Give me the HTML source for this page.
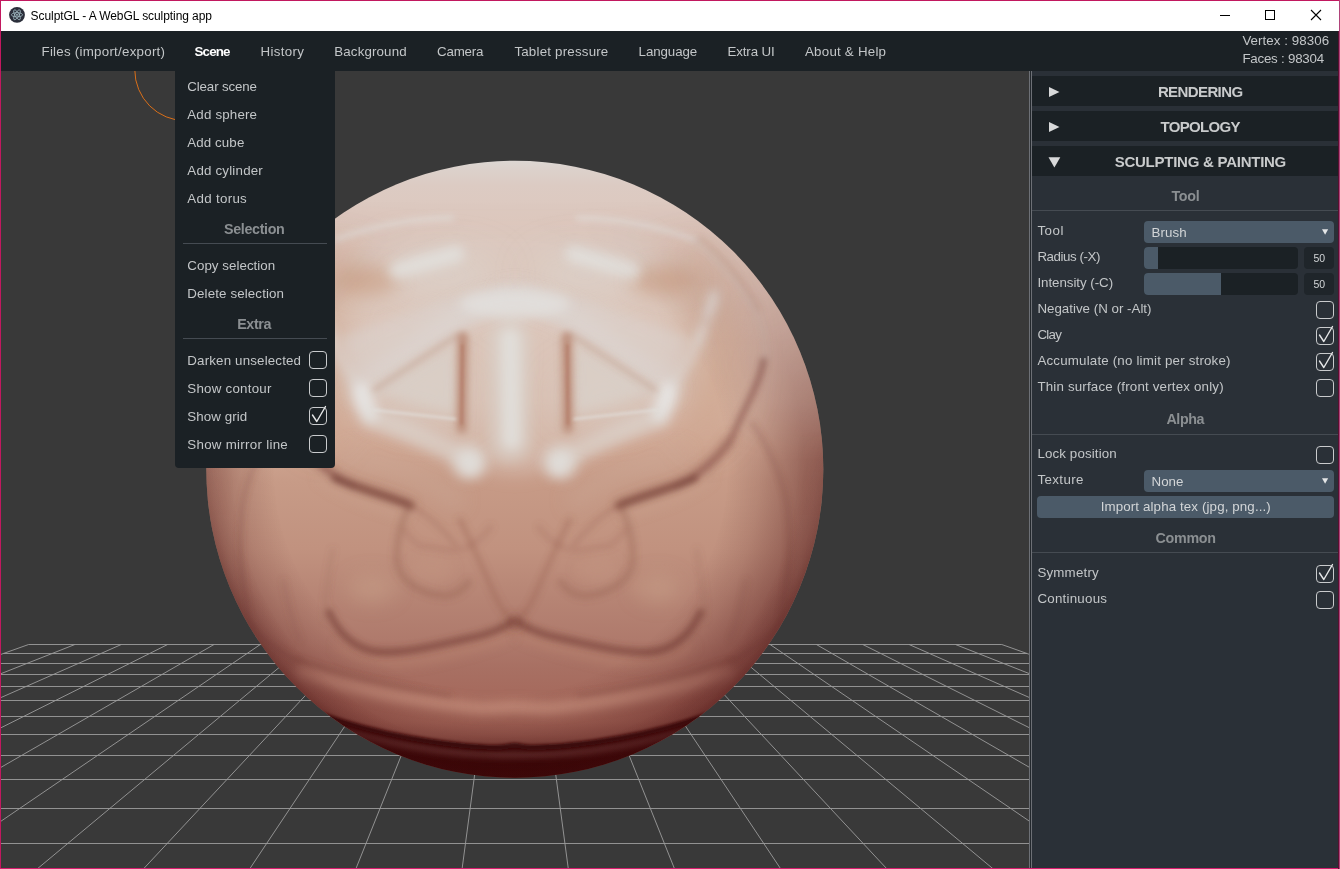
<!DOCTYPE html>
<html>
<head>
<meta charset="utf-8">
<title>SculptGL - A WebGL sculpting app</title>
<style>
html,body{margin:0;padding:0;}
body{width:1340px;height:869px;overflow:hidden;background:#393939;font-family:"Liberation Sans",sans-serif;position:relative;}
.abs{position:absolute;}
.t{position:absolute;white-space:nowrap;line-height:20px;height:20px;}
#titlebar{left:1px;top:1px;width:1338px;height:30px;background:#ffffff;}
#menubar{left:1px;top:31px;width:1337px;height:40px;background:#1b2125;}
#canvas{left:1px;top:71px;width:1028px;height:797px;background:#393939;overflow:hidden;}
#dropdown{left:175px;top:71px;width:160px;height:397px;background:#1b2125;border-radius:0 0 4px 4px;}
#sidebar{left:1029px;top:71px;width:309px;height:797px;background:#2a3037;}
.sbl{position:absolute;top:0;width:1px;height:797px;background:#6d7076;}
.hdr{position:absolute;left:3px;width:306px;height:30px;background:#1b2125;}
.hr{position:absolute;height:1px;background:#454b52;}
.sel{position:absolute;left:1144px;width:190px;height:22px;background:#4b5a68;border-radius:4px;}
.sld{position:absolute;left:1144px;width:154px;height:22px;background:#1b2125;border-radius:4px;overflow:hidden;}
.sld i{position:absolute;left:0;top:0;height:22px;background:#4b5a68;display:block;}
.val{position:absolute;left:1304px;width:30px;height:22px;background:#1f252a;border-radius:4px;}
.cb{position:absolute;width:16px;height:16px;border:1px solid #c9cbcd;border-radius:4px;}
.btn{position:absolute;left:1037px;top:496px;width:297px;height:22px;background:#4b5a68;border-radius:4px;}
</style>
</head>
<body>
<!-- window frame -->
<div class="abs" id="titlebar"></div>
<div class="abs" id="menubar"></div>

<!-- 3d canvas -->
<div class="abs" id="canvas">
<svg width="1028" height="797" viewBox="1 71 1028 797" style="position:absolute;left:0;top:0">
  <path d="M28.6 644.5H1001.8M3.4 653.5H1027.0M-5.0 663.5H1035.0M-5.0 674.5H1035.0M-5.0 686.5H1035.0M-5.0 700.5H1035.0M-5.0 716.5H1035.0M-5.0 734.5H1035.0M-5.0 755.5H1035.0M-5.0 779.5H1035.0M-5.0 808.5H1035.0M-5.0 843.5H1035.0M492.0 644.5L460.6 880.0M538.4 644.5L569.8 880.0M445.7 644.5L351.4 880.0M584.7 644.5L679.0 880.0M399.3 644.5L242.3 880.0M631.1 644.5L788.1 880.0M353.0 644.5L133.1 880.0M677.4 644.5L897.3 880.0M306.7 644.5L23.9 880.0M723.7 644.5L1006.5 880.0M260.3 644.5L-85.3 880.0M770.1 644.5L1115.7 880.0M214.0 644.5L-194.4 880.0M816.4 644.5L1224.8 880.0M167.6 644.5L-303.6 880.0M862.8 644.5L1334.0 880.0M121.3 644.5L-412.8 880.0M909.1 644.5L1443.2 880.0M74.9 644.5L-522.0 880.0M955.5 644.5L1552.4 880.0M28.6 644.5L-631.1 880.0M1001.8 644.5L1661.5 880.0" stroke="#9c9c9c" stroke-width="0.9" fill="none"/>
  <circle cx="185.5" cy="70" r="50.7" fill="none" stroke="#d96f19" stroke-width="1"/>
    <defs>
    <clipPath id="sclip"><circle cx="514.8" cy="469.2" r="308.5"/></clipPath>
    <linearGradient id="sv" gradientUnits="userSpaceOnUse" x1="0" y1="160.0" x2="0" y2="778.0">
      <stop offset="0.0000" stop-color="#dcd7d3"/>
      <stop offset="0.0162" stop-color="#dcd1cb"/>
      <stop offset="0.0405" stop-color="#dccbc3"/>
      <stop offset="0.1246" stop-color="#dec7bc"/>
      <stop offset="0.2751" stop-color="#dec3b5"/>
      <stop offset="0.3883" stop-color="#d8b7a6"/>
      <stop offset="0.4612" stop-color="#d0a793"/>
      <stop offset="0.5194" stop-color="#c79b87"/>
      <stop offset="0.6294" stop-color="#c1927f"/>
      <stop offset="0.7104" stop-color="#b68474"/>
      <stop offset="0.7767" stop-color="#af7a6c"/>
      <stop offset="0.8204" stop-color="#a87063"/>
      <stop offset="0.8738" stop-color="#a5695c"/>
      <stop offset="0.9094" stop-color="#a26558"/>
      <stop offset="0.9304" stop-color="#965a4f"/>
      <stop offset="0.9466" stop-color="#854a41"/>
      <stop offset="1.0000" stop-color="#6a342e"/>
    </linearGradient>
    <radialGradient id="sedge" gradientUnits="userSpaceOnUse" cx="500.79999999999995" cy="469.2" r="323.5">
      <stop offset="0" stop-color="#480c0e" stop-opacity="0"/>
      <stop offset="0.70" stop-color="#480c0e" stop-opacity="0"/>
      <stop offset="0.80" stop-color="#480c0e" stop-opacity="0.13"/>
      <stop offset="0.88" stop-color="#480c0e" stop-opacity="0.28"/>
      <stop offset="0.94" stop-color="#480c0e" stop-opacity="0.39"/>
      <stop offset="1" stop-color="#480c0e" stop-opacity="0.45"/>
    </radialGradient>
    <radialGradient id="srim" gradientUnits="userSpaceOnUse" cx="514.8" cy="469.2" r="309.5">
      <stop offset="0" stop-color="#400a0c" stop-opacity="0"/>
      <stop offset="0.91" stop-color="#400a0c" stop-opacity="0"/>
      <stop offset="0.97" stop-color="#400a0c" stop-opacity="0.15"/>
      <stop offset="1" stop-color="#400a0c" stop-opacity="0.3"/>
    </radialGradient>
    <linearGradient id="rmaskg" gradientUnits="userSpaceOnUse" x1="0" y1="430" x2="0" y2="600">
      <stop offset="0" stop-color="#000"/>
      <stop offset="1" stop-color="#fff"/>
    </linearGradient>
    <mask id="rmask" maskUnits="userSpaceOnUse" x="190" y="150" width="660" height="640">
      <rect x="190" y="150" width="660" height="640" fill="url(#rmaskg)"/>
    </mask>
    <linearGradient id="emaskg" gradientUnits="userSpaceOnUse" x1="0" y1="200" x2="0" y2="460">
      <stop offset="0" stop-color="#000"/>
      <stop offset="0.35" stop-color="#444"/>
      <stop offset="1" stop-color="#fff"/>
    </linearGradient>
    <mask id="emask" maskUnits="userSpaceOnUse" x="190" y="150" width="660" height="640">
      <rect x="190" y="150" width="660" height="640" fill="url(#emaskg)"/>
    </mask>
    <filter id="b1" filterUnits="userSpaceOnUse" x="0" y="60" width="1040" height="820"><feGaussianBlur stdDeviation="1.5"/></filter>
    <filter id="b2" filterUnits="userSpaceOnUse" x="0" y="60" width="1040" height="820"><feGaussianBlur stdDeviation="3"/></filter>
    <filter id="b4" filterUnits="userSpaceOnUse" x="0" y="60" width="1040" height="820"><feGaussianBlur stdDeviation="5.5"/></filter>
    <filter id="b8" filterUnits="userSpaceOnUse" x="0" y="60" width="1040" height="820"><feGaussianBlur stdDeviation="9"/></filter>
    <filter id="b16" filterUnits="userSpaceOnUse" x="0" y="60" width="1040" height="820"><feGaussianBlur stdDeviation="18"/></filter>
  </defs>
  <g clip-path="url(#sclip)">
    <circle cx="514.8" cy="469.2" r="309.5" fill="url(#sv)"/>
    <!-- upper face: slightly lighter/greyer overlay following the wing line -->
    <g filter="url(#b8)">
      <path d="M300 300 L330 395 L366 420 L470 466 L514.8 474 L559.6 466 L663.6 420 L699.6 395 L729.6 300 L640 230 L390 230Z" fill="#d9cac2" opacity="0.5"/>
    </g>
    <!-- symmetric half features -->
    <g id="half" fill="none" stroke-linecap="round" stroke-linejoin="round">
      <g filter="url(#b16)">
        <ellipse cx="445" cy="275" rx="55" ry="22" fill="#dddbd8" opacity="0.4"/>
        <ellipse cx="425" cy="395" rx="50" ry="28" fill="#d9cfc8" opacity="0.5"/>
        <!-- outer peach zone between mask ridge and outer groove -->
        <path d="M335 248 C295 285 280 340 292 405 L325 450 L350 405 C335 350 338 300 365 262Z" fill="#cba188" opacity="0.6"/>
      </g>
      <g filter="url(#b8)">
        <!-- arch band -->
        <path d="M362 388 L440 331 Q480 301 520 298" stroke="#dddbd8" stroke-width="20" opacity="0.6"/>
        <!-- peach patch under thin arc -->
        <ellipse cx="366" cy="281" rx="32" ry="14" fill="#cba188" opacity="0.7"/>
        <!-- cheek bump -->
        <ellipse cx="372" cy="588" rx="24" ry="15" fill="#c49b86" opacity="0.6"/>
        <!-- light zone between wing and under-wing groove -->
        <path d="M350 455 C390 465 430 480 455 500" stroke="#c9a896" stroke-width="16" opacity="0.45"/>
      </g>
      <g filter="url(#b4)">
        <path d="M376 392 L457 340 L455 414Z" fill="#d9cfc8" stroke="none" opacity="0.8"/>
        <!-- light plate above the hypotenuse -->
        <path d="M358 386 L340 338 L430 305 L505 287 L516 300 L460 328 Z" fill="#dcd6d1" stroke="none" opacity="0.5"/>
        <!-- highlight elongated -->
        <path d="M398 270 L456 254" stroke="#e2e0dd" stroke-width="17" opacity="0.85"/>
        <!-- mask inner ridge -->
        <path d="M316 293 C322 320 332 345 340 358 C348 372 356 388 364 400" stroke="#dddbd8" stroke-width="9" opacity="0.6"/>
        <path d="M315 296 L320 312" stroke="#e2e0dd" stroke-width="9" opacity="0.8"/>
        <path d="M327 330 L331 342" stroke="#e2e0dd" stroke-width="8" opacity="0.7"/>
        <!-- corner highlight (brightest) -->
        <path d="M362 392 C363 400 366 408 370 413" stroke="#e6e4e2" stroke-width="19" opacity="0.95"/>
        <!-- wing -->
        <path d="M370 418 C400 428 440 445 470 462" stroke="#dddbd8" stroke-width="20" opacity="0.5"/>
        <ellipse cx="470" cy="463" rx="12" ry="13" fill="#e3e1df" opacity="0.95"/>
        <ellipse cx="469" cy="462" rx="19" ry="19" fill="#ddd8d4" opacity="0.55"/>
        <!-- shadow under wing -->
        <path d="M300 440 C315 462 335 478 355 486 C380 494 395 498 410 505" stroke="#96604f" stroke-width="9" opacity="0.45"/>
        <path d="M322 478 C345 497 385 508 405 515" stroke="#cba48f" stroke-width="8" opacity="0.5"/>
        <!-- ridge under cheek groove -->
        <path d="M340 647 C360 664 400 666 440 656 C470 649 495 642 510 634" stroke="#ba8571" stroke-width="8" opacity="0.6"/>
        <ellipse cx="432" cy="570" rx="22" ry="14" fill="#c39682" opacity="0.4"/>
      </g>
      <g filter="url(#b2)">
        <!-- vertical groove -->
        <path d="M463 338 L462 428" stroke="#c29a85" stroke-width="14" opacity="0.6"/>
        <path d="M462.6 336 L461.5 428" stroke="#b98673" stroke-width="6" opacity="0.9"/>
        <path d="M459 334 L374 390" stroke="#c5a595" stroke-width="4" opacity="0.7"/>
        <path d="M335.6 239.7 Q390 219 452 218" stroke="#e2e0dd" stroke-width="4.5" opacity="0.75"/>
        <!-- F1 upper subtle -->
        <path d="M335.6 240 C312 260 290 285 275 310 C264 332 262 350 266 366" stroke="#d2c4bb" stroke-width="3" opacity="0.6"/>
        <path d="M330 237 C306 258 284 284 270 310" stroke="#b58670" stroke-width="3" opacity="0.4"/>
        <!-- F1 dark -->
        <path d="M266 360 C270 385 284 405 297 436 C305 452 330 476 353 486" stroke="#88524a" stroke-width="6" opacity="0.62"/>
        <path d="M335 478 C362 490 392 497 411 505.5" stroke="#77433a" stroke-width="7" opacity="0.78"/>
        <path d="M410 505 C425 513 442 528 456 545" stroke="#9c6657" stroke-width="3" opacity="0.5"/>
        <!-- U folds -->
        <path d="M410.6 505 C400 520 396 545 397 563 C400 580 420 594 443.6 596 C455 596 463 590 468.6 582" stroke="#8f5a4c" stroke-width="7" opacity="0.33"/>
        <path d="M404.9 530 C412 542 420 547 427 546.4 C440 549 452 552 462.9 549 C475 545 484 536 490.6 527" stroke="#9a6555" stroke-width="5.5" opacity="0.25"/>
        <!-- nose lines -->
        <path d="M460 520 C475 550 488 580 496 598 C502 610 508 617 513 621" stroke="#96604f" stroke-width="5" opacity="0.42"/>
        <!-- cheek groove -->
        <path d="M329 612 C338 632 352 646 372 651 C400 656 440 644 470 638 C490 634 503 628 512 622" stroke="#733c33" stroke-width="6.5" opacity="0.68"/>
        <!-- groove above lip -->
        <path d="M297 660 C330 673 380 686 450 697" stroke="#7e483e" stroke-width="4" opacity="0.6"/>
        <!-- edge-parallel groove (F2) -->
        <path d="M277.8 422 C262 445 245 480 241.9 510 C239 540 239 570 250 621 C262 640 280 652 297 660" stroke="#7f4940" stroke-width="2.5" opacity="0.45"/>
        <path d="M333 549 C328 575 324 600 325 621" stroke="#936054" stroke-width="2.5" opacity="0.35"/>
        <path d="M283.6 580 C287 600 292 622 300 640" stroke="#8a564b" stroke-width="2.5" opacity="0.35"/>
      </g>
      <g filter="url(#b1)">
        <path d="M374 410 L455 419" stroke="#e2e0dd" stroke-width="2.5" opacity="0.75"/>
        <path d="M462.4 345 L461.6 424" stroke="#ad705c" stroke-width="2" opacity="0.8"/>
      </g>
    </g>
    <use href="#half" transform="translate(1029.6 0) scale(-1 1)"/>
    <!-- centre features -->
    <g filter="url(#b4)" fill="none" stroke-linecap="round">
      <path d="M509 340 L510 440" stroke="#d8d1cb" stroke-width="44" opacity="0.55"/>
      <path d="M510 338 L511.5 440" stroke="#e2e0dd" stroke-width="20" opacity="0.85"/>
      <ellipse cx="514.8" cy="304" rx="55" ry="14" fill="#e2e0dd" opacity="0.8"/>
      <ellipse cx="514.8" cy="622" rx="7" ry="5" fill="#7c4238" opacity="0.7"/>
      <!-- lip ridge -->
      <path d="M300 672 C340 685 400 700 475 708 C495 709.5 505 707 514.8 707 C524.6 707 534.6 709.5 554.6 708 C629.6 700 689.6 685 729.6 672" stroke="#cd9884" stroke-width="10" opacity="0.9"/>
    </g>
    <!-- chin (dark region under the mouth line) -->
    <path d="M200 712 L318 712 C350 724 380 732 410 737.5 C450 744 485 746.5 514.8 746.5 C545 746.5 580 744 620 737.5 C650 732 680 724 711 712 L830 712 L830 800 L200 800Z" fill="#330404"/>
    <g filter="url(#b2)" fill="none" stroke-linecap="round">
      <!-- lighter band under the mouth line -->
      <path d="M345 731 C380 741 410 747 440 751 C470 754.5 495 755 514.8 755 C535 755 560 754.5 589.6 751 C620 747 650 741 684.6 731" stroke="#744240" stroke-width="6" opacity="0.9"/>
    </g>
    <g filter="url(#b1)" fill="none" stroke-linecap="round">
      <path d="M322 715 C350 725 380 732.5 410 738 C450 745 480 747.5 497 747.5 C505 747.5 509 745.5 514.8 745.5 C520 745.5 524 747.5 532 747.5 C550 747.5 580 745 620 738 C650 732.5 680 725 707.6 715" stroke="#380707" stroke-width="5.5"/>
    </g>
    <circle cx="514.8" cy="469.2" r="309.5" fill="url(#sedge)" mask="url(#emask)"/>
    <circle cx="514.8" cy="469.2" r="309.5" fill="url(#srim)" mask="url(#rmask)"/>
  </g>

  
</svg>
</div>

<!-- dropdown -->
<div class="abs" id="dropdown"></div>
<div class="hr" style="left:183px;top:243px;width:144px;"></div>
<div class="hr" style="left:183px;top:338px;width:144px;"></div>
<div class="cb" style="left:309px;top:351px;"></div>
<div class="cb" style="left:309px;top:379px;"></div>
<div class="cb" style="left:309px;top:407px;"></div>
<div class="cb" style="left:309px;top:435px;"></div>

<!-- sidebar -->
<div class="abs" id="sidebar">
  <div class="sbl" style="left:0"></div>
  <div class="sbl" style="left:1px;background:#23282d"></div>
  <div class="sbl" style="left:2px"></div>
  <div class="hdr" style="top:5px"></div>
  <div class="hdr" style="top:40px"></div>
  <div class="hdr" style="top:75px"></div>
</div>
<div class="hr" style="left:1032px;top:210px;width:306px;"></div>
<div class="hr" style="left:1032px;top:434px;width:306px;"></div>
<div class="hr" style="left:1032px;top:552px;width:306px;"></div>
<div class="sel" style="top:221px"></div>
<div class="sld" style="top:247px"><i style="width:14px"></i></div>
<div class="val" style="top:247px"></div>
<div class="sld" style="top:273px"><i style="width:77px"></i></div>
<div class="val" style="top:273px"></div>
<div class="cb" style="left:1316px;top:301px;"></div>
<div class="cb" style="left:1316px;top:327px;"></div>
<div class="cb" style="left:1316px;top:353px;"></div>
<div class="cb" style="left:1316px;top:379px;"></div>
<div class="cb" style="left:1316px;top:446px;"></div>
<div class="sel" style="top:470px"></div>
<div class="btn"></div>
<div class="cb" style="left:1316px;top:565px;"></div>
<div class="cb" style="left:1316px;top:591px;"></div>

<!-- icons -->
<svg class="abs" style="left:0;top:0" width="1340" height="869" viewBox="0 0 1340 869">
  <!-- window controls -->
  <path d="M1220 15.5H1230" stroke="#000" stroke-width="1" fill="none"/>
  <rect x="1265.5" y="10.5" width="9" height="9" stroke="#000" stroke-width="1" fill="none"/>
  <path d="M1311 10L1321 20M1321 10L1311 20" stroke="#000" stroke-width="1.1" fill="none"/>
  <!-- electron icon -->
  <circle cx="17" cy="14.8" r="7.9" fill="#2b2e3a"/>
  <g fill="none" stroke="#b4d0d8" stroke-width="0.65" transform="translate(17 14.8)">
    <ellipse rx="5.6" ry="2.1"/>
    <ellipse rx="5.6" ry="2.1" transform="rotate(60)"/>
    <ellipse rx="5.6" ry="2.1" transform="rotate(120)"/>
  </g>
  <circle cx="17" cy="14.8" r="0.9" fill="#b4d0d8"/>
  <!-- sidebar triangles -->
  <path d="M1049 87L1059.5 92L1049 97Z" fill="#d8d9da"/>
  <path d="M1049 122L1059.5 127L1049 132Z" fill="#d8d9da"/>
  <path d="M1048.5 157.2L1060.3 157.2L1054.4 167.6Z" fill="#d8d9da"/>
  <!-- select arrows -->
  <path d="M1322 229.3L1328.2 229.3L1325.1 234.8Z" fill="#e4e6e7"/>
  <path d="M1322 478.3L1328.2 478.3L1325.1 483.8Z" fill="#e4e6e7"/>
  <!-- checkmarks -->
  <g fill="none" stroke="#e6e7e8" stroke-width="1.4" stroke-linecap="round" stroke-linejoin="round">
    <path d="M312.5 415L316.8 421.5L325.5 406.5"/>
    <path d="M1319.5 335L1323.8 341.5L1332.5 326.5"/>
    <path d="M1319.5 361L1323.8 367.5L1332.5 352.5"/>
    <path d="M1319.5 573L1323.8 579.5L1332.5 564.5"/>
  </g>
</svg>

<div class="t" style="left:30.6px;top:5.5px;font-size:12px;font-weight:400;color:#000;letter-spacing:-0.073px;">SculptGL - A WebGL sculpting app</div>
<div class="t" style="left:41.5px;top:42.2px;font-size:13.33px;font-weight:400;color:#c3c6c8;letter-spacing:0.250px;">Files (import/export)</div>
<div class="t" style="left:194.5px;top:42.2px;font-size:13.33px;font-weight:700;color:#ffffff;letter-spacing:-0.820px;">Scene</div>
<div class="t" style="left:260.5px;top:42.2px;font-size:13.33px;font-weight:400;color:#c3c6c8;letter-spacing:0.339px;">History</div>
<div class="t" style="left:334.3px;top:42.2px;font-size:13.33px;font-weight:400;color:#c3c6c8;letter-spacing:0.129px;">Background</div>
<div class="t" style="left:437.0px;top:42.2px;font-size:13.33px;font-weight:400;color:#c3c6c8;letter-spacing:-0.181px;">Camera</div>
<div class="t" style="left:514.4px;top:42.2px;font-size:13.33px;font-weight:400;color:#c3c6c8;letter-spacing:0.198px;">Tablet pressure</div>
<div class="t" style="left:638.6px;top:42.2px;font-size:13.33px;font-weight:400;color:#c3c6c8;letter-spacing:-0.102px;">Language</div>
<div class="t" style="left:727.6px;top:42.2px;font-size:13.33px;font-weight:400;color:#c3c6c8;letter-spacing:-0.163px;">Extra UI</div>
<div class="t" style="left:805.0px;top:42.2px;font-size:13.33px;font-weight:400;color:#c3c6c8;letter-spacing:0.223px;">About &amp; Help</div>
<div class="t" style="left:1242.4px;top:30.6px;font-size:13.33px;font-weight:400;color:#c3c6c8;letter-spacing:0.064px;">Vertex : 98306</div>
<div class="t" style="left:1242.4px;top:49.2px;font-size:13.33px;font-weight:400;color:#c3c6c8;letter-spacing:-0.231px;">Faces : 98304</div>
<div class="t" style="left:187.3px;top:76.6px;font-size:13.33px;font-weight:400;color:#c3c6c8;letter-spacing:-0.143px;">Clear scene</div>
<div class="t" style="left:187.3px;top:104.5px;font-size:13.33px;font-weight:400;color:#c3c6c8;letter-spacing:0.170px;">Add sphere</div>
<div class="t" style="left:187.3px;top:132.5px;font-size:13.33px;font-weight:400;color:#c3c6c8;letter-spacing:0.096px;">Add cube</div>
<div class="t" style="left:187.3px;top:160.5px;font-size:13.33px;font-weight:400;color:#c3c6c8;letter-spacing:0.195px;">Add cylinder</div>
<div class="t" style="left:187.3px;top:188.5px;font-size:13.33px;font-weight:400;color:#c3c6c8;letter-spacing:0.305px;">Add torus</div>
<div class="t" style="left:187.3px;top:255.5px;font-size:13.33px;font-weight:400;color:#c3c6c8;letter-spacing:0.037px;">Copy selection</div>
<div class="t" style="left:187.3px;top:283.5px;font-size:13.33px;font-weight:400;color:#c3c6c8;letter-spacing:0.124px;">Delete selection</div>
<div class="t" style="left:187.3px;top:351.1px;font-size:13.33px;font-weight:400;color:#c3c6c8;letter-spacing:0.160px;">Darken unselected</div>
<div class="t" style="left:187.3px;top:379.1px;font-size:13.33px;font-weight:400;color:#c3c6c8;letter-spacing:0.236px;">Show contour</div>
<div class="t" style="left:187.3px;top:407.1px;font-size:13.33px;font-weight:400;color:#c3c6c8;letter-spacing:0.090px;">Show grid</div>
<div class="t" style="left:187.3px;top:435.1px;font-size:13.33px;font-weight:400;color:#c3c6c8;letter-spacing:0.280px;">Show mirror line</div>
<div class="t" style="left:224.0px;top:218.9px;font-size:14.3px;font-weight:700;color:#8b8f92;letter-spacing:-0.345px;">Selection</div>
<div class="t" style="left:237.2px;top:313.9px;font-size:14.3px;font-weight:700;color:#8b8f92;letter-spacing:-0.391px;">Extra</div>
<div class="t" style="left:1157.9px;top:81.9px;font-size:15px;font-weight:700;color:#c9cbcc;letter-spacing:-0.602px;">RENDERING</div>
<div class="t" style="left:1160.4px;top:116.9px;font-size:15px;font-weight:700;color:#c9cbcc;letter-spacing:-0.648px;">TOPOLOGY</div>
<div class="t" style="left:1114.7px;top:151.9px;font-size:15px;font-weight:700;color:#c9cbcc;letter-spacing:-0.252px;">SCULPTING &amp; PAINTING</div>
<div class="t" style="left:1171.4px;top:185.6px;font-size:14.3px;font-weight:700;color:#8b8f92;letter-spacing:-0.242px;">Tool</div>
<div class="t" style="left:1166.4px;top:409.3px;font-size:14.3px;font-weight:700;color:#8b8f92;letter-spacing:-0.405px;">Alpha</div>
<div class="t" style="left:1155.4px;top:527.7px;font-size:14.3px;font-weight:700;color:#8b8f92;letter-spacing:-0.251px;">Common</div>
<div class="t" style="left:1037.4px;top:220.5px;font-size:13.33px;font-weight:400;color:#c3c6c8;letter-spacing:0.516px;">Tool</div>
<div class="t" style="left:1037.4px;top:246.5px;font-size:13.33px;font-weight:400;color:#c3c6c8;letter-spacing:-0.441px;">Radius (-X)</div>
<div class="t" style="left:1037.4px;top:272.5px;font-size:13.33px;font-weight:400;color:#c3c6c8;letter-spacing:-0.045px;">Intensity (-C)</div>
<div class="t" style="left:1037.4px;top:298.5px;font-size:13.33px;font-weight:400;color:#c3c6c8;letter-spacing:0.002px;">Negative (N or -Alt)</div>
<div class="t" style="left:1037.4px;top:324.5px;font-size:13.33px;font-weight:400;color:#c3c6c8;letter-spacing:-0.691px;">Clay</div>
<div class="t" style="left:1037.4px;top:350.5px;font-size:13.33px;font-weight:400;color:#c3c6c8;letter-spacing:0.184px;">Accumulate (no limit per stroke)</div>
<div class="t" style="left:1037.4px;top:376.5px;font-size:13.33px;font-weight:400;color:#c3c6c8;letter-spacing:0.176px;">Thin surface (front vertex only)</div>
<div class="t" style="left:1037.4px;top:443.5px;font-size:13.33px;font-weight:400;color:#c3c6c8;letter-spacing:0.125px;">Lock position</div>
<div class="t" style="left:1037.4px;top:469.5px;font-size:13.33px;font-weight:400;color:#c3c6c8;letter-spacing:0.397px;">Texture</div>
<div class="t" style="left:1037.4px;top:562.5px;font-size:13.33px;font-weight:400;color:#c3c6c8;letter-spacing:0.188px;">Symmetry</div>
<div class="t" style="left:1037.4px;top:588.5px;font-size:13.33px;font-weight:400;color:#c3c6c8;letter-spacing:0.240px;">Continuous</div>
<div class="t" style="left:1151.5px;top:222.8px;font-size:13.33px;font-weight:400;color:#d2d5d7;letter-spacing:0.068px;">Brush</div>
<div class="t" style="left:1151.5px;top:471.8px;font-size:13.33px;font-weight:400;color:#d2d5d7;letter-spacing:0.042px;">None</div>
<div class="t" style="left:1100.7px;top:497.3px;font-size:13.33px;font-weight:400;color:#d2d5d7;letter-spacing:0.118px;">Import alpha tex (jpg, png...)</div>
<div class="t" style="left:1313.6px;top:247.8px;font-size:10.5px;font-weight:400;color:#d2d5d7;letter-spacing:-0.087px;">50</div>
<div class="t" style="left:1313.6px;top:273.8px;font-size:10.5px;font-weight:400;color:#d2d5d7;letter-spacing:-0.087px;">50</div>

<!-- window border -->
<div class="abs" style="left:0;top:0;width:1340px;height:1px;background:#c2185f;"></div>
<div class="abs" style="left:0;top:0;width:1px;height:869px;background:#c2185f;"></div>
<div class="abs" style="left:0;top:868px;width:1340px;height:1px;background:#d81b6e;"></div>
<div class="abs" style="left:1338px;top:31px;width:1px;height:838px;background:#5a1030;"></div>
<div class="abs" style="left:1339px;top:0;width:1px;height:869px;background:#b0437a;"></div>
</body>
</html>
